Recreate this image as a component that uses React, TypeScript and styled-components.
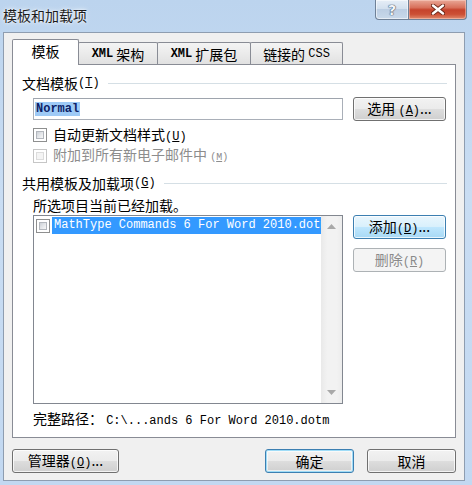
import React from "react";
import styled, { createGlobalStyle, css } from "styled-components";

const CJK = `"Noto Sans CJK SC", "Noto Sans", sans-serif`;
const MONO = `"Liberation Mono", "DejaVu Sans Mono", monospace`;

const GlobalStyle = createGlobalStyle`
  html, body { margin: 0; padding: 0; }
  body { font-family: ${CJK}; background: #c6dbf2; }
  * { box-sizing: border-box; }
`;

const Window = styled.div`
  width: 472px;
  height: 485px;
  display: flex;
  flex-direction: column;
  background: linear-gradient(180deg, #bcd4ee 0%, #c9ddf3 40%, #c2d8f1 100%);
  font-family: ${CJK};
  color: #000;
  overflow: hidden;
`;

const TitleBar = styled.div`
  flex: none;
  height: 32px;
  display: flex;
  align-items: flex-start;
  padding: 0 5px 0 3px;
`;

const Title = styled.div`
  flex: 1;
  margin-top: 6px;
  font-size: 14px;
  line-height: 18px;
  color: #1c1c1c;
  text-shadow: 0 0 5px rgba(255, 255, 255, 0.95), 0 0 2px rgba(255, 255, 255, 0.9);
`;

const CaptionButtons = styled.div`
  display: flex;
`;

const CaptionButton = styled.div<{ $variant: "help" | "close" }>`
  height: 20px;
  display: flex;
  align-items: center;
  justify-content: center;
  border: 1px solid #6f8197;
  border-top: none;
  ${(p) =>
    p.$variant === "help"
      ? css`
          width: 34px;
          border-radius: 0 0 0 4px;
          background: linear-gradient(180deg, #e6eef7 0%, #d3e0ee 45%, #bccee3 50%, #c9d9ea 100%);
          box-shadow: inset 0 0 0 1px rgba(255, 255, 255, 0.55);
        `
      : css`
          width: 58px;
          border-left: none;
          border-radius: 0 0 4px 0;
          background: linear-gradient(180deg, #e9a897 0%, #d8705b 40%, #c6432c 52%, #cc4f35 75%, #e08a6c 100%);
          box-shadow: inset 0 0 0 1px rgba(255, 220, 210, 0.45);
        `}
`;

const HelpGlyph = styled.span`
  font-family: "DejaVu Sans", sans-serif;
  font-weight: bold;
  font-size: 14px;
  line-height: 14px;
  color: #f2f5f9;
  text-shadow: 0 0 1px #42536a, 0 0 1px #42536a, 0 0 1px #42536a;
`;

const Client = styled.div`
  flex: 1;
  margin: 0 7px 4px 3px;
  border: 1px solid #8e9db0;
  background: #f0f0f0;
  display: flex;
  flex-direction: column;
  padding: 6px 8px 7px 8px;
`;

const TabStrip = styled.div`
  display: flex;
  align-items: flex-end;
  height: 26px;
  flex: none;
`;

const Tab = styled.div<{ $active?: boolean; $w: number }>`
  width: ${(p) => p.$w}px;
  display: flex;
  align-items: center;
  justify-content: center;
  border: 1px solid #898c95;
  border-bottom: none;
  border-radius: 2px 2px 0 0;
  font-size: 14px;
  white-space: nowrap;
  ${(p) =>
    p.$active
      ? css`
          height: 26px;
          background: #ffffff;
          position: relative;
          z-index: 1;
          padding-bottom: 3px;
        `
      : css`
          height: 22px;
          margin-bottom: 1px;
          margin-left: -1px;
          background: linear-gradient(180deg, #f4f4f4 0%, #ebebeb 50%, #e1e1e1 100%);
          padding-top: 1px;
        `}
`;

const Latin = styled.span<{ $bold?: boolean; $size?: number }>`
  font-family: ${MONO};
  font-size: ${(p) => p.$size ?? 12}px;
  font-weight: ${(p) => (p.$bold ? "bold" : "normal")};
`;

const Panel = styled.div`
  flex: 1;
  margin-top: -1px;
  border: 1px solid #898c95;
  background: #ffffff;
  display: flex;
  flex-direction: column;
  padding: 8px 8px 9px 9px;
`;

const GroupHeader = styled.div<{ $mt?: number }>`
  display: flex;
  align-items: center;
  height: 20px;
  margin-top: ${(p) => p.$mt ?? 0}px;
  font-size: 14px;
  line-height: 20px;
  white-space: nowrap;
`;

const GroupLine = styled.div`
  flex: 1;
  height: 1px;
  margin-left: 8px;
  background: #d5dfe5;
`;

const Indent = styled.div<{ $mt?: number }>`
  margin-left: 11px;
  margin-top: ${(p) => p.$mt ?? 0}px;
  display: flex;
  align-items: center;
`;

const TextBox = styled.div`
  width: 310px;
  height: 22px;
  border: 1px solid #a9afb8;
  border-top-color: #9ea4ad;
  background: #fff;
  display: flex;
  align-items: center;
  padding-left: 1px;
  margin-right: 10px;
`;

const Selected = styled.span`
  background: #9ecaf6;
  color: #0d1f66;
  font-family: ${MONO};
  font-weight: bold;
  font-size: 12px;
  line-height: 14px;
  padding: 0 1px;
`;

const Button = styled.button<{ $w: number; $state?: "normal" | "hot" | "default" | "disabled" }>`
  width: ${(p) => p.$w}px;
  height: 24px;
  flex: none;
  padding: 0;
  border-radius: 3px;
  font-family: ${CJK};
  font-size: 14px;
  line-height: 20px;
  color: #000;
  white-space: nowrap;
  border: 1px solid #707070;
  background: linear-gradient(180deg, #f2f2f2 0%, #ebebeb 48%, #dddddd 52%, #cfcfcf 100%);
  box-shadow: inset 0 0 0 1px rgba(255, 255, 255, 0.75);
  ${(p) =>
    p.$state === "hot" &&
    css`
      border-color: #3c7fb1;
      background: linear-gradient(180deg, #eaf6fd 0%, #d9f0fc 48%, #bee6fd 52%, #a7d9f5 100%);
    `}
  ${(p) =>
    p.$state === "default" &&
    css`
      border-color: #3c7fb1;
      box-shadow: inset 0 0 0 1px #9fdcf7, inset 0 0 0 2px rgba(255, 255, 255, 0.6);
    `}
  ${(p) =>
    p.$state === "disabled" &&
    css`
      border-color: #adb2b5;
      background: #f4f4f4;
      color: #8a8a8a;
      box-shadow: none;
    `}
`;

const CheckRow = styled.div<{ $mt?: number; $disabled?: boolean }>`
  margin-left: 11px;
  margin-top: ${(p) => p.$mt ?? 0}px;
  height: 20px;
  display: flex;
  align-items: center;
  gap: 6px;
  font-size: 14px;
  line-height: 20px;
  color: ${(p) => (p.$disabled ? "#8d8d8d" : "#000")};
`;

const CheckBox = styled.span<{ $disabled?: boolean }>`
  width: 14px;
  height: 14px;
  flex: none;
  position: relative;
  border: 1px solid ${(p) => (p.$disabled ? "#c6c6c6" : "#8e8f8f")};
  background: #fff;
  &::after {
    content: "";
    position: absolute;
    inset: 2px;
    border: 1px solid ${(p) => (p.$disabled ? "#dcdcdc" : "#b3b7bd")};
    background: ${(p) =>
      p.$disabled
        ? "#f4f4f4"
        : "linear-gradient(135deg, #cdd1d7 0%, #e6e8eb 55%, #f7f7f7 100%)"};
  }
`;

const InfoText = styled.div`
  margin-left: 11px;
  margin-top: 2px;
  height: 20px;
  font-size: 14px;
  line-height: 20px;
`;

const ListRow = styled.div`
  margin-left: 11px;
  display: flex;
  align-items: flex-start;
`;

const ListBox = styled.div`
  width: 310px;
  height: 189px;
  border: 1px solid #828790;
  background: #fff;
  display: flex;
  margin-right: 10px;
`;

const ListItems = styled.div`
  flex: 1;
  min-width: 0;
  padding: 1px 0 0 2px;
`;

const ListItem = styled.div`
  display: flex;
  align-items: center;
  height: 17px;
  gap: 2px;
`;

const ItemText = styled.div`
  flex: 1;
  min-width: 0;
  height: 17px;
  background: #3399ff;
  color: #fff;
  font-family: ${MONO};
  font-size: 12px;
  line-height: 17px;
  white-space: nowrap;
  overflow: hidden;
  padding-left: 2px;
`;

const ScrollBar = styled.div`
  width: 21px;
  flex: none;
  display: flex;
  flex-direction: column;
  justify-content: space-between;
  background: linear-gradient(90deg, #e9e9e9 0%, #f2f2f2 30%, #f2f2f2 75%, #ececec 100%);
`;

const ScrollArrow = styled.div`
  height: 21px;
  display: flex;
  align-items: center;
  justify-content: center;
`;

const SideButtons = styled.div`
  display: flex;
  flex-direction: column;
  gap: 9px;
`;

const PathText = styled.div`
  margin-left: 11px;
  margin-top: 4px;
  height: 20px;
  font-size: 14px;
  line-height: 20px;
  white-space: nowrap;
`;

const Footer = styled.div`
  flex: none;
  margin-top: 11px;
  display: flex;
  align-items: center;
`;

const Spacer = styled.div`
  flex: 1;
`;

const FooterGap = styled.div`
  width: 13px;
`;

const Key = ({ k, size = 12 }: { k: string; size?: number }) => (
  <Latin $size={size}>
    (<u>{k}</u>)
  </Latin>
);

const Arrow = ({ up }: { up?: boolean }) => (
  <svg width="9" height="5" viewBox="0 0 9 5">
    <path d={up ? "M0 5 L4.5 0 L9 5 Z" : "M0 0 L4.5 5 L9 0 Z"} fill="#a9a9a9" />
  </svg>
);

export default function App() {
  return (
    <>
      <GlobalStyle />
      <Window>
        <TitleBar>
          <Title>模板和加载项</Title>
          <CaptionButtons>
            <CaptionButton $variant="help">
              <HelpGlyph>?</HelpGlyph>
            </CaptionButton>
            <CaptionButton $variant="close">
              <svg width="14" height="11" viewBox="0 0 14 11">
                <path d="M2 1.5 L12 9.5 M12 1.5 L2 9.5" stroke="#6a2617" strokeWidth="4.2" strokeLinecap="round" />
                <path d="M2 1.5 L12 9.5 M12 1.5 L2 9.5" stroke="#ffffff" strokeWidth="2.4" strokeLinecap="round" />
              </svg>
            </CaptionButton>
          </CaptionButtons>
        </TitleBar>
        <Client>
          <TabStrip>
            <Tab $active $w={67}>模板</Tab>
            <Tab $w={80}>
              <Latin $bold>XML</Latin>&nbsp;架构
            </Tab>
            <Tab $w={94}>
              <Latin $bold>XML</Latin>&nbsp;扩展包
            </Tab>
            <Tab $w={93}>
              链接的&nbsp;<Latin>CSS</Latin>
            </Tab>
          </TabStrip>
          <Panel>
            <GroupHeader>
              文档模板<Key k="T" />
              <GroupLine />
            </GroupHeader>
            <Indent $mt={4}>
              <TextBox>
                <Selected>Normal</Selected>
              </TextBox>
              <Button $w={93}>
                选用 <Key k="A" />...
              </Button>
            </Indent>
            <CheckRow $mt={4}>
              <CheckBox />
              <span>
                自动更新文档样式<Key k="U" />
              </span>
            </CheckRow>
            <CheckRow $mt={1} $disabled>
              <CheckBox $disabled />
              <span>
                附加到所有新电子邮件中 <Key k="M" size={10} />
              </span>
            </CheckRow>
            <GroupHeader $mt={7}>
              共用模板及加载项<Key k="G" />
              <GroupLine />
            </GroupHeader>
            <InfoText>所选项目当前已经加载。</InfoText>
            <ListRow>
              <ListBox>
                <ListItems>
                  <ListItem>
                    <CheckBox />
                    <ItemText>MathType Commands 6 For Word 2010.dotm</ItemText>
                  </ListItem>
                </ListItems>
                <ScrollBar>
                  <ScrollArrow>
                    <Arrow up />
                  </ScrollArrow>
                  <ScrollArrow>
                    <Arrow />
                  </ScrollArrow>
                </ScrollBar>
              </ListBox>
              <SideButtons>
                <Button $w={93} $state="hot">
                  添加<Key k="D" />...
                </Button>
                <Button $w={93} $state="disabled">
                  删除<Key k="R" />
                </Button>
              </SideButtons>
            </ListRow>
            <PathText>
              完整路径：&nbsp;<Latin>C:\...ands 6 For Word 2010.dotm</Latin>
            </PathText>
          </Panel>
          <Footer>
            <Button $w={107}>
              管理器<Key k="O" />...
            </Button>
            <Spacer />
            <Button $w={89} $state="default">
              确定
            </Button>
            <FooterGap />
            <Button $w={89}>取消</Button>
          </Footer>
        </Client>
      </Window>
    </>
  );
}
